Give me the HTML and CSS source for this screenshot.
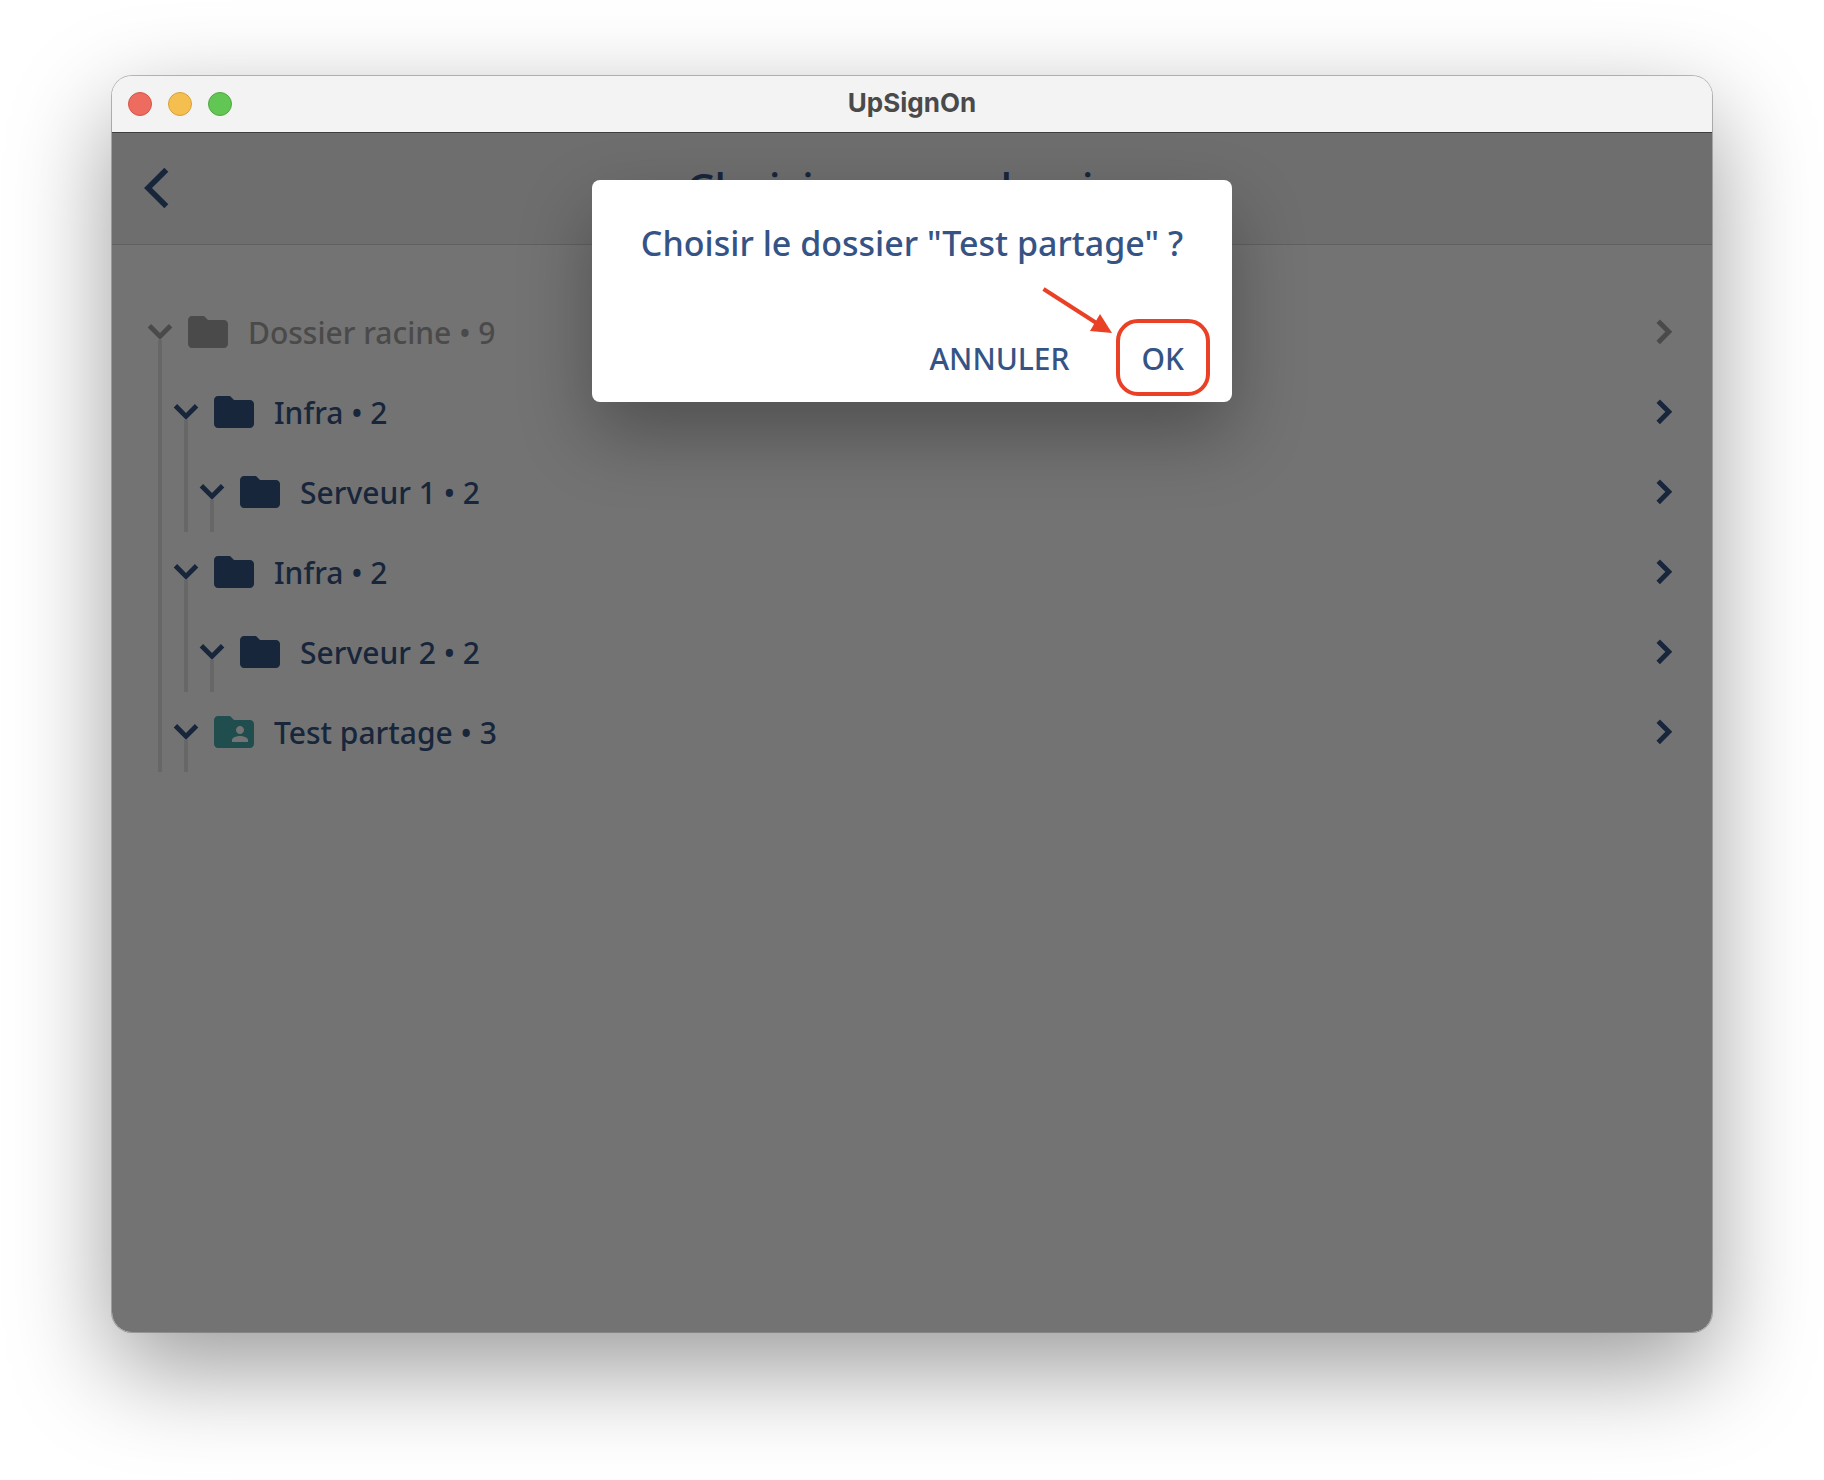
FILE: index.html
```html
<!DOCTYPE html>
<html lang="fr">
<head>
<meta charset="utf-8">
<meta name="viewport" content="width=device-width, initial-scale=1">
<title>UpSignOn</title>
<link rel="stylesheet" href="styles.css">
</head>
<body>
<svg class="sprite" aria-hidden="true">
  <symbol id="down" viewBox="0 0 24 24"><path d="M6.700 8.900 12 14.200 17.300 8.900" fill="none" stroke="currentColor" stroke-width="2.450"/></symbol>
  <symbol id="right" viewBox="0 0 24 24"><path d="M9.100 6.600 14.400 11.900 9.100 17.200" fill="none" stroke="currentColor" stroke-width="2.450"/></symbol>
  <symbol id="back" viewBox="0 0 24 24"><path d="M11.170 2.830 2 12l9.170 9.170" fill="none" stroke="currentColor" stroke-width="2.800"/></symbol>
  <symbol id="folder" viewBox="0 0 24 24"><path d="M10 4H4c-1.1 0-1.99.9-1.99 2L2 18c0 1.1.9 2 2 2h16c1.1 0 2-.9 2-2V8c0-1.1-.9-2-2-2h-8l-2-2z"/></symbol>
  <symbol id="shared" viewBox="0 0 24 24"><path d="M20 6h-8l-2-2H4c-1.1 0-1.99.9-1.99 2L2 18c0 1.1.9 2 2 2h16c1.1 0 2-.9 2-2V8c0-1.1-.9-2-2-2zm-5 3c1.1 0 2 .9 2 2s-.9 2-2 2-2-.9-2-2 .9-2 2-2zm4 8h-8v-1c0-1.33 2.67-2 4-2s4 .67 4 2v1z"/></symbol>
</svg>
<div class="window">
  <div class="titlebar">
    <div class="lights">
      <button class="light close" aria-label="Fermer"></button>
      <button class="light minimize" aria-label="Réduire"></button>
      <button class="light zoom" aria-label="Agrandir"></button>
    </div>
    <span class="app-name">UpSignOn</span>
  </div>
  <div class="content">
    <header class="header">
      <button class="back" aria-label="Retour"><svg class="icon"><use href="#back"/></svg></button>
      <h1 class="page-title">Choisir aucun dossier</h1>
    </header>
    <main class="main">
      <ul class="tree">
        <li class="node">
          <div class="row root">
            <button class="toggle" aria-label="Replier Dossier racine"><svg class="icon"><use href="#down"/></svg></button>
            <button class="folder"><svg class="icon"><use href="#folder"/></svg><span class="label">Dossier racine • 9</span><svg class="icon"><use href="#right"/></svg></button>
          </div>
          <ul class="children">
            <li class="node">
              <div class="row">
                <button class="toggle" aria-label="Replier Infra"><svg class="icon"><use href="#down"/></svg></button>
                <button class="folder"><svg class="icon"><use href="#folder"/></svg><span class="label">Infra • 2</span><svg class="icon"><use href="#right"/></svg></button>
              </div>
              <ul class="children">
                <li class="node">
                  <div class="row">
                    <button class="toggle" aria-label="Replier Serveur 1"><svg class="icon"><use href="#down"/></svg></button>
                    <button class="folder"><svg class="icon"><use href="#folder"/></svg><span class="label">Serveur 1 • 2</span><svg class="icon"><use href="#right"/></svg></button>
                  </div>
                </li>
              </ul>
            </li>
            <li class="node">
              <div class="row">
                <button class="toggle" aria-label="Replier Infra"><svg class="icon"><use href="#down"/></svg></button>
                <button class="folder"><svg class="icon"><use href="#folder"/></svg><span class="label">Infra • 2</span><svg class="icon"><use href="#right"/></svg></button>
              </div>
              <ul class="children">
                <li class="node">
                  <div class="row">
                    <button class="toggle" aria-label="Replier Serveur 2"><svg class="icon"><use href="#down"/></svg></button>
                    <button class="folder"><svg class="icon"><use href="#folder"/></svg><span class="label">Serveur 2 • 2</span><svg class="icon"><use href="#right"/></svg></button>
                  </div>
                </li>
              </ul>
            </li>
            <li class="node">
              <div class="row">
                <button class="toggle" aria-label="Replier Test partage"><svg class="icon"><use href="#down"/></svg></button>
                <button class="folder"><svg class="icon teal"><use href="#shared"/></svg><span class="label">Test partage • 3</span><svg class="icon"><use href="#right"/></svg></button>
              </div>
            </li>
          </ul>
        </li>
      </ul>
    </main>
    <div class="overlay">
      <section class="dialog" role="dialog" aria-modal="true" aria-labelledby="question">
        <h2 class="question" id="question">Choisir le dossier "Test partage" ?</h2>
        <div class="actions">
          <button class="action">ANNULER</button>
          <button class="action confirm">OK
            <svg class="arrow" viewBox="0 0 72 48" aria-hidden="true"><path d="M1.500 2 56 37" fill="none" stroke="#ea4025" stroke-width="4"/><path d="M58 27 70 46 48 44z" fill="#ea4025"/></svg>
          </button>
        </div>
      </section>
    </div>
  </div>
</div>
</body>
</html>
```
FILE: styles.css
```css
* {
  box-sizing: border-box;
}

body {
  margin: 0;
  padding: 76px 112px 148px;
  min-height: 100vh;
  display: flex;
  background: #fff;
  color: #355485;
  font-family: "Noto Sans", sans-serif;
  font-weight: 500;
}

button {
  border: 0;
  padding: 0;
  background: none;
  color: inherit;
  font: inherit;
}

h1,
h2,
ul {
  margin: 0;
  padding: 0;
  font-weight: 500;
  list-style: none;
}

.sprite {
  display: none;
}

.icon {
  width: 48px;
  height: 48px;
  flex: none;
  display: block;
  fill: currentColor;
}

.window {
  flex: 1;
  display: flex;
  flex-direction: column;
  border-radius: 20px;
  box-shadow: 0 0 0 1px rgba(0, 0, 0, 0.25), 0 36px 100px rgba(0, 0, 0, 0.4);
}

.titlebar {
  height: 56px;
  padding: 0 16px;
  display: grid;
  grid-template-columns: 1fr auto 1fr;
  align-items: center;
  background: #f3f3f3;
  border-radius: 20px 20px 0 0;
}

.lights {
  display: flex;
  gap: 16px;
}

.light {
  width: 24px;
  height: 24px;
  border: 1px solid;
  border-radius: 50%;
}

.close {
  background: #ed6b5f;
  border-color: #d65549;
}

.minimize {
  background: #f5bf4f;
  border-color: #d8a13c;
}

.zoom {
  background: #62c655;
  border-color: #4fa93f;
}

.app-name {
  padding-bottom: 2px;
  color: #4a4a4a;
  font: 700 26px/32px Inter, sans-serif;
}

.content {
  flex: 1;
  position: relative;
  display: flex;
  flex-direction: column;
  border-radius: 0 0 20px 20px;
  overflow: hidden;
  background: #fff;
}

.header {
  height: 113px;
  padding: 0 32px 2px;
  display: grid;
  grid-template-columns: 1fr auto 1fr;
  align-items: center;
  background: #f3f3f3;
  border-top: 1px solid #8c8c8c;
  border-bottom: 1px solid #d4d4d4;
}

.back {
  width: 48px;
}

.page-title {
  font-size: 44px;
  line-height: 60px;
}

.main {
  padding: 47px 24px;
}

.node {
  position: relative;
}

.node::before {
  content: "";
  position: absolute;
  top: 48px;
  bottom: 0;
  left: 22px;
  width: 4px;
  background: #e5e5e5;
}

.children {
  padding-left: 26px;
}

.row {
  position: relative;
  height: 80px;
  display: flex;
  align-items: center;
}

.root {
  color: #a4a4a4;
}

.folder {
  flex: 1;
  display: flex;
  align-items: center;
  gap: 16px;
  text-align: left;
}

.label {
  flex: 1;
  padding-top: 2px;
  font-size: 30px;
  line-height: 40px;
}

.teal {
  color: #47adad;
}

.overlay {
  position: absolute;
  inset: 0;
  padding: 48px;
  display: flex;
  justify-content: center;
  align-items: flex-start;
  background: rgba(0, 0, 0, 0.55);
}

.dialog {
  padding: 39px 24px 11px;
  min-width: 640px;
  background: #fff;
  border-radius: 8px;
  box-shadow: 0 32px 72px rgba(0, 0, 0, 0.3);
}

.question {
  font-size: 34px;
  line-height: 48px;
  text-align: center;
}

.actions {
  margin-top: 60px;
  display: flex;
  justify-content: flex-end;
  gap: 24px;
}

.action {
  position: relative;
  padding: 8px 24px;
  font-size: 30px;
  line-height: 48px;
}

.confirm::after {
  content: "";
  position: absolute;
  inset: -8px -2px -5px;
  border: 4px solid #ea4025;
  border-radius: 22px;
}

.arrow {
  position: absolute;
  right: 94px;
  bottom: 56px;
  width: 72px;
  height: 48px;
}
```
